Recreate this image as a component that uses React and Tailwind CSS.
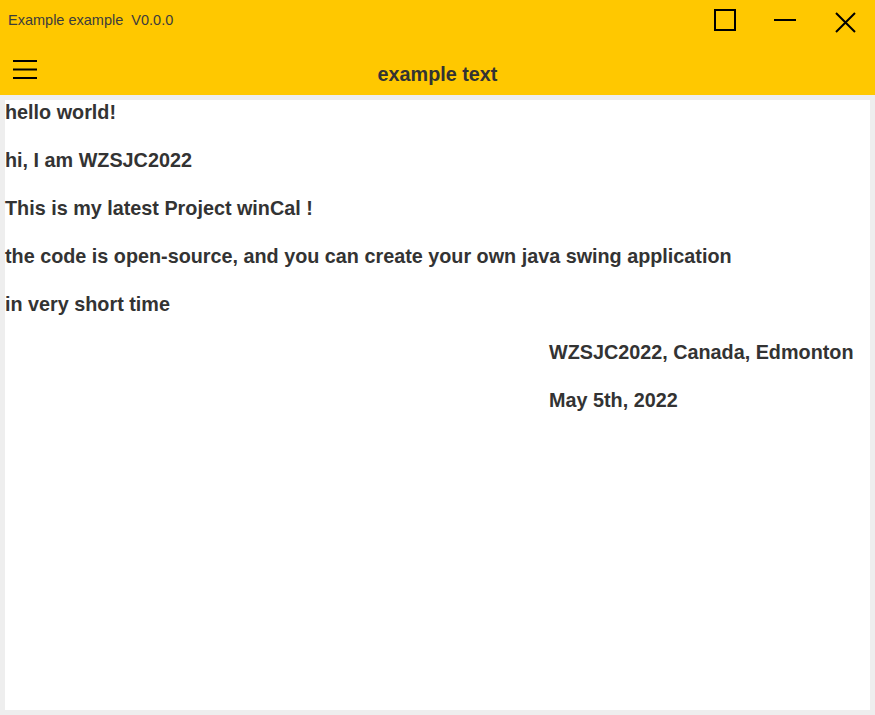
import React from 'react';

const lines = [
    'hello world!',
    'hi, I am WZSJC2022',
    'This is my latest Project winCal !',
    'the code is open-source, and you can create your own java swing application',
    'in very short time',
];

const App = () => {
    return (
        <div className="w-[875px] h-[715px] flex flex-col bg-[#eeeeee] font-['Liberation_Sans',Arial,sans-serif] text-[#333333]">
            {/* title bar */}
            <div className="h-[95px] bg-[#ffc800] flex flex-col shrink-0">
                <div className="h-[42px] flex items-center justify-between">
                    <span className="pl-[8px] text-[14.5px] text-[#3c3c3c] whitespace-pre">Example example  V0.0.0</span>
                    <svg width="170" height="42" viewBox="0 0 170 42">
                        <rect x="10" y="10" width="20" height="20" fill="none" stroke="#000" strokeWidth="2" />
                        <line x1="69" y1="20" x2="91" y2="20" stroke="#000" strokeWidth="2" />
                        <path d="M131 13 L150 32 M150 13 L131 32" stroke="#000" strokeWidth="2" />
                    </svg>
                </div>
                <div className="relative flex-1 flex items-center justify-center">
                    <svg className="absolute left-[12px] top-[16px]" width="26" height="22" viewBox="0 0 26 22">
                        <path d="M1 3 H25 M1 11.5 H25 M1 20 H25" stroke="#000" strokeWidth="2" />
                    </svg>
                    <span className="text-[19.8px] font-bold mt-[12px]">example text</span>
                </div>
            </div>
            {/* content */}
            <div className="flex-1 m-[5px] bg-white">
                {lines.map((t) => (
                    <div key={t} className="leading-[24px] mb-[24px] text-[19.8px] font-bold">{t}</div>
                ))}
                <div className="pl-[544px]">
                    <div className="leading-[24px] mb-[24px] text-[19.8px] font-bold">WZSJC2022, Canada, Edmonton</div>
                    <div className="leading-[24px] mb-[24px] text-[19.8px] font-bold">May 5th, 2022</div>
                </div>
            </div>
        </div>
    );
};

export default App;
